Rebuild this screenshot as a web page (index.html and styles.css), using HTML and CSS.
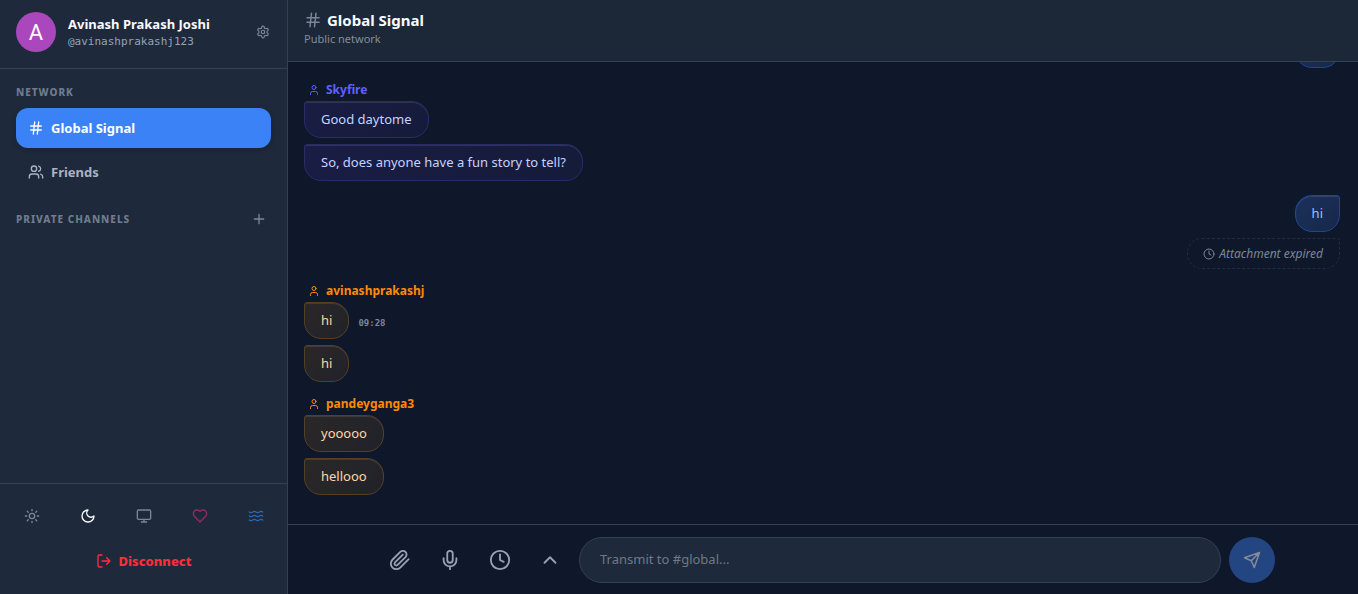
FILE: index.html
```html
<!DOCTYPE html>
<html lang="en">

<head>
  <meta charset="UTF-8">
  <meta name="viewport" content="width=device-width, initial-scale=1.0">
  <title>Global Signal</title>
  <link rel="stylesheet" href="styles.css">
</head>

<body>

  <!-- shared icons -->
  <svg class="sprite" aria-hidden="true">
    <symbol id="i-hash" viewBox="0 0 24 24"><path d="M4 9h16M4 15h16M10 3 8 21M16 3l-2 18"/></symbol>
    <symbol id="i-user" viewBox="0 0 24 24"><circle cx="12" cy="7" r="4"/><path d="M19 21v-2a4 4 0 0 0-4-4H9a4 4 0 0 0-4 4v2"/></symbol>
    <symbol id="i-clock" viewBox="0 0 24 24"><circle cx="12" cy="12" r="10"/><path d="M12 6v6l4 2"/></symbol>
  </svg>

  <div class="app">

    <aside class="sidebar">

      <div class="profile">
        <div class="avatar">A</div>
        <div class="profile-text">
          <div class="profile-name">Avinash Prakash Joshi</div>
          <div class="profile-handle">@avinashprakashj123</div>
        </div>
        <button class="icon-btn" type="button" aria-label="Settings">
          <svg class="icon icon-sm" viewBox="0 0 24 24"><path d="M12.22 2h-.44a2 2 0 0 0-2 2v.18a2 2 0 0 1-1 1.73l-.43.25a2 2 0 0 1-2 0l-.15-.08a2 2 0 0 0-2.73.73l-.22.38a2 2 0 0 0 .73 2.73l.15.1a2 2 0 0 1 1 1.72v.51a2 2 0 0 1-1 1.74l-.15.09a2 2 0 0 0-.73 2.73l.22.38a2 2 0 0 0 2.73.73l.15-.08a2 2 0 0 1 2 0l.43.25a2 2 0 0 1 1 1.73V20a2 2 0 0 0 2 2h.44a2 2 0 0 0 2-2v-.18a2 2 0 0 1 1-1.73l.43-.25a2 2 0 0 1 2 0l.15.08a2 2 0 0 0 2.73-.73l.22-.39a2 2 0 0 0-.73-2.73l-.15-.08a2 2 0 0 1-1-1.74v-.5a2 2 0 0 1 1-1.74l.15-.09a2 2 0 0 0 .73-2.73l-.22-.38a2 2 0 0 0-2.73-.73l-.15.08a2 2 0 0 1-2 0l-.43-.25a2 2 0 0 1-1-1.73V4a2 2 0 0 0-2-2z"/><circle cx="12" cy="12" r="3"/></svg>
        </button>
      </div>

      <nav class="channels">
        <h2 class="section-title">Network</h2>
        <a class="channel active" href="#"><svg class="icon icon-md"><use href="#i-hash"/></svg>Global Signal</a>
        <a class="channel" href="#"><svg class="icon icon-md" viewBox="0 0 24 24"><path d="M16 21v-2a4 4 0 0 0-4-4H6a4 4 0 0 0-4 4v2"/><circle cx="9" cy="7" r="4"/><path d="M22 21v-2a4 4 0 0 0-3-3.87M16 3.13a4 4 0 0 1 0 7.75"/></svg>Friends</a>
        <div class="section-row">
          <h2 class="section-title">Private Channels</h2>
          <button class="icon-btn" type="button" aria-label="Add channel">
            <svg class="icon icon-md" viewBox="0 0 24 24"><path d="M5 12h14M12 5v14"/></svg>
          </button>
        </div>
      </nav>

      <div class="sidebar-footer">
        <div class="themes">
          <button class="theme" type="button" aria-label="Light"><svg class="icon icon-md" viewBox="0 0 24 24"><circle cx="12" cy="12" r="4"/><path d="M12 2v2M12 20v2M4.93 4.93l1.41 1.41M17.66 17.66l1.41 1.41M2 12h2M20 12h2M6.34 17.66l-1.41 1.41M19.07 4.93l-1.41 1.41"/></svg></button>
          <button class="theme selected" type="button" aria-label="Dark"><svg class="icon icon-md" viewBox="0 0 24 24"><path d="M12 3a6 6 0 0 0 9 9 9 9 0 1 1-9-9Z"/></svg></button>
          <button class="theme" type="button" aria-label="System"><svg class="icon icon-md" viewBox="0 0 24 24"><rect x="2" y="3" width="20" height="14" rx="2"/><path d="M8 21h8M12 17v4"/></svg></button>
          <button class="theme pink" type="button" aria-label="Rose"><svg class="icon icon-md" viewBox="0 0 24 24"><path d="M19 14c1.49-1.46 3-3.21 3-5.5A5.5 5.5 0 0 0 16.5 3c-1.76 0-3 .5-4.5 2-1.5-1.5-2.74-2-4.5-2A5.5 5.5 0 0 0 2 8.5c0 2.3 1.5 4.05 3 5.5l7 7Z"/></svg></button>
          <button class="theme ocean" type="button" aria-label="Ocean"><svg class="icon icon-md" viewBox="0 0 24 24"><path d="M2 6c.6.5 1.2 1 2.5 1C7 7 7 5 9.5 5c2.6 0 2.4 2 5 2 2.5 0 2.5-2 5-2 1.3 0 1.9.5 2.5 1"/><path d="M2 12c.6.5 1.2 1 2.5 1 2.5 0 2.5-2 5-2 2.6 0 2.4 2 5 2 2.5 0 2.5-2 5-2 1.3 0 1.9.5 2.5 1"/><path d="M2 18c.6.5 1.2 1 2.5 1 2.5 0 2.5-2 5-2 2.6 0 2.4 2 5 2 2.5 0 2.5-2 5-2 1.3 0 1.9.5 2.5 1"/></svg></button>
        </div>
        <button class="disconnect" type="button">
          <svg class="icon icon-md" viewBox="0 0 24 24"><path d="M9 21H5a2 2 0 0 1-2-2V5a2 2 0 0 1 2-2h4M16 17l5-5-5-5M21 12H9"/></svg>
          Disconnect
        </button>
      </div>

    </aside>

    <main class="chat">

      <header class="chat-header">
        <h1><svg class="icon icon-lg"><use href="#i-hash"/></svg>Global Signal</h1>
        <p>Public network</p>
      </header>

      <section class="messages">

        <div class="group own">
          <div class="bubble"></div>
        </div>

        <div class="group indigo">
          <div class="sender"><svg class="icon icon-xs"><use href="#i-user"/></svg>Skyfire</div>
          <div class="bubble">Good daytome</div>
          <div class="bubble">So, does anyone have a fun story to tell?</div>
        </div>

        <div class="group own">
          <div class="bubble">hi</div>
          <div class="expired"><svg class="icon icon-xs"><use href="#i-clock"/></svg>Attachment expired</div>
        </div>

        <div class="group orange">
          <div class="sender"><svg class="icon icon-xs"><use href="#i-user"/></svg>avinashprakashj</div>
          <div class="line">
            <div class="bubble">hi</div>
            <time>09:28</time>
          </div>
          <div class="bubble">hi</div>
        </div>

        <div class="group orange">
          <div class="sender"><svg class="icon icon-xs"><use href="#i-user"/></svg>pandeyganga3</div>
          <div class="bubble">yooooo</div>
          <div class="bubble">hellooo</div>
        </div>

      </section>

      <footer class="composer">
        <form class="composer-inner">
          <button class="tool" type="button" aria-label="Attach file"><svg class="icon icon-xl" viewBox="0 0 24 24"><path d="m21.44 11.05-9.19 9.19a6 6 0 0 1-8.49-8.49l8.57-8.57A4 4 0 1 1 18 8.84l-8.59 8.57a2 2 0 0 1-2.83-2.83l8.49-8.48"/></svg></button>
          <button class="tool" type="button" aria-label="Record voice"><svg class="icon icon-xl" viewBox="0 0 24 24"><path d="M12 2a3 3 0 0 0-3 3v7a3 3 0 0 0 6 0V5a3 3 0 0 0-3-3Z"/><path d="M19 10v2a7 7 0 0 1-14 0v-2M12 19v3"/></svg></button>
          <button class="tool" type="button" aria-label="Timer"><svg class="icon icon-xl"><use href="#i-clock"/></svg></button>
          <button class="tool" type="button" aria-label="More"><svg class="icon icon-xl" viewBox="0 0 24 24"><path d="m18 15-6-6-6 6"/></svg></button>
          <input type="text" aria-label="Message" placeholder="Transmit to #global...">
          <button class="send" type="button" aria-label="Send"><svg class="icon icon-lg" viewBox="0 0 24 24"><path d="m22 2-7 20-4-9-9-4ZM22 2 11 13"/></svg></button>
        </form>
      </footer>

    </main>

  </div>

</body>

</html>
```

FILE: styles.css
```css
* {
  box-sizing: border-box;
  margin: 0;
  padding: 0;
}

body {
  background: #0f172a;
  color: #f8fafc;
  font-family: "Noto Sans", "Open Sans", sans-serif;
  font-size: 13px;
  line-height: 20px;
}

button,
input {
  font: inherit;
  color: inherit;
  background: none;
  border: none;
}

button {
  display: flex;
  align-items: center;
  justify-content: center;
  cursor: pointer;
}

.sprite {
  position: absolute;
  width: 0;
  height: 0;
}

.icon {
  flex: none;
  fill: none;
  stroke: currentColor;
  stroke-width: 2;
  stroke-linecap: round;
  stroke-linejoin: round;
}

.icon-xs { width: 12px; height: 12px; }
.icon-sm { width: 14px; height: 14px; }
.icon-md { width: 16px; height: 16px; }
.icon-lg { width: 18px; height: 18px; }
.icon-xl { width: 22px; height: 22px; }

.app {
  display: flex;
  height: 100vh;
}

/* sidebar */

.sidebar {
  display: flex;
  flex-direction: column;
  flex: none;
  width: 288px;
  background: #1e293b;
  border-right: 1px solid #334155;
}

.profile {
  display: flex;
  align-items: center;
  gap: 12px;
  padding: 12px 16px 16px;
  border-bottom: 1px solid #334155;
}

.avatar {
  width: 40px;
  height: 40px;
  border-radius: 50%;
  background: #ab47bc;
  font-family: Roboto, sans-serif;
  font-size: 22px;
  line-height: 41px;
  text-align: center;
}

.profile-text {
  flex: 1;
  padding-top: 2px;
}

.profile-name {
  font-weight: 700;
  line-height: 18px;
}

.profile-handle {
  color: #94a3b8;
  font-family: "DejaVu Sans Mono", monospace;
  font-size: 11px;
  line-height: 18px;
}

.icon-btn {
  width: 16px;
  height: 16px;
  color: #7b8798;
}

.channels {
  flex: 1;
  padding: 16px;
}

.section-title {
  color: #707c8d;
  font-size: 10px;
  font-weight: 800;
  letter-spacing: 1px;
  line-height: 15px;
  text-transform: uppercase;
}

.channel {
  display: flex;
  align-items: center;
  gap: 7px;
  height: 40px;
  margin-bottom: 4px;
  padding: 0 12px;
  border-radius: 12px;
  color: #a9b3c1;
  font-weight: 700;
  text-decoration: none;
}

.section-title + .channel {
  margin-top: 8px;
}

.channel.active {
  background: #3b82f6;
  color: #fff;
  box-shadow: 0 2px 5px rgba(15, 23, 42, 0.3);
}

.section-row {
  display: flex;
  align-items: center;
  justify-content: space-between;
  margin-top: 19px;
  padding-right: 4px;
}

.sidebar-footer {
  padding: 16px 16px 17px;
  border-top: 1px solid #334155;
}

.themes {
  display: flex;
  justify-content: space-between;
}

.theme {
  width: 31px;
  height: 31px;
  color: #7b8798;
}

.theme.selected { color: #fff; }
.theme.pink { color: #962a68; }
.theme.ocean { color: #2f68b3; }

.disconnect {
  gap: 7px;
  width: 100%;
  height: 32px;
  margin-top: 14px;
  color: #ff2d3f;
  font-weight: 800;
}

/* chat */

.chat {
  display: flex;
  flex-direction: column;
  flex: 1;
  min-width: 0;
}

.chat-header {
  padding: 9px 16px 14px;
  background: #1c2738;
  border-bottom: 1px solid #334155;
}

.chat-header h1 {
  display: flex;
  align-items: center;
  gap: 5px;
  font-size: 15px;
  line-height: 22px;
}

.chat-header h1 .icon {
  color: #7b8798;
}

.chat-header p {
  color: #838d9b;
  font-size: 11px;
  line-height: 16px;
}

.messages {
  display: flex;
  flex-direction: column;
  justify-content: flex-end;
  flex: 1;
  gap: 14px;
  min-height: 0;
  padding: 0 18px 29px 16px;
  overflow: hidden;
}

.group {
  display: flex;
  flex-direction: column;
  align-items: flex-start;
  gap: 6px;
}

.group.own {
  align-items: flex-end;
}

.sender {
  display: flex;
  align-items: center;
  gap: 6px;
  margin-bottom: -3px;
  padding-left: 4px;
  font-size: 12px;
  font-weight: 700;
  line-height: 16px;
}

.line {
  display: flex;
  align-items: center;
  gap: 9px;
}

.line time {
  padding-top: 5px;
  color: #7b8798;
  font-family: "DejaVu Sans Mono", monospace;
  font-size: 9px;
  font-weight: 700;
}

.bubble {
  min-width: 45px;
  min-height: 37px;
  padding: 8px 16px;
  border: 1px solid;
  border-radius: 3px 17px 17px 17px;
  line-height: 19px;
  box-shadow: inset 0 1px 0 rgba(255, 255, 255, 0.1);
}

.own .bubble {
  border-color: #1f4596;
  border-radius: 17px 3px 17px 17px;
  background: linear-gradient(135deg, #1b315c, #172748);
  color: #8ec5ff;
}

.indigo .sender { color: #615fff; }

.indigo .bubble {
  border-color: #2a2b6b;
  background: linear-gradient(135deg, #1a1d44, #151b39);
  color: #c6d2ff;
}

.orange .sender { color: #ff8904; }

.orange .bubble {
  border-color: #573f22;
  background: linear-gradient(135deg, #2b2727, #20222a);
  color: #ffd6a7;
}

.expired {
  display: flex;
  align-items: center;
  gap: 4px;
  padding: 6px 16px 5px 15px;
  border: 1px dashed #222c40;
  border-radius: 15px 3px 15px 15px;
  color: #7b8798;
  font-size: 12px;
  font-style: italic;
  line-height: 18px;
}

/* composer */

.composer {
  padding: 12px 16px 11px 24px;
  border-top: 1px solid #334155;
}

.composer-inner {
  display: flex;
  align-items: center;
  gap: 8px;
  max-width: 896px;
  margin: 0 auto;
}

.tool {
  width: 42px;
  height: 42px;
  color: #98a2b1;
}

.composer input {
  flex: 1;
  min-width: 0;
  height: 46px;
  padding: 0 20px 2px;
  border: 1px solid #334155;
  border-radius: 23px;
  background: #1e293b;
}

.composer input::placeholder {
  color: #6f7987;
}

.send {
  width: 46px;
  height: 46px;
  border-radius: 50%;
  background: #234682;
  color: #848b99;
}
```
